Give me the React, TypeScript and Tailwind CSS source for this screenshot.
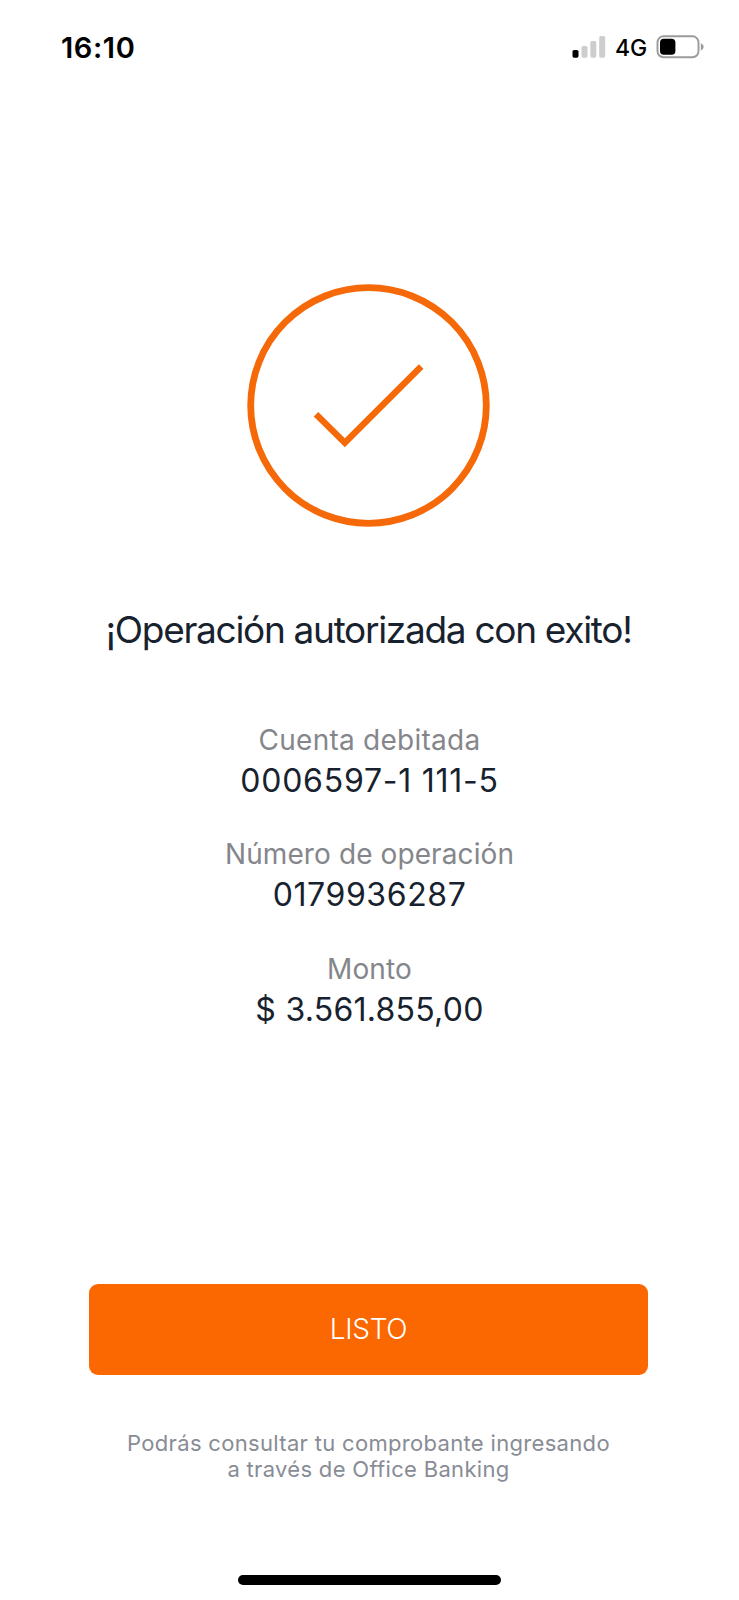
import React from 'react';

const details = [
  {
    label: 'Cuenta debitada',
    value: '0006597-1 111-5',
    labelSpacing: 'tracking-[0.25px]',
    valueSpacing: 'tracking-[0.75px]',
  },
  {
    label: 'Número de operación',
    value: '0179936287',
    labelSpacing: 'tracking-[0.1px]',
    valueSpacing: 'tracking-[0.6px]',
  },
  {
    label: 'Monto',
    value: '$ 3.561.855,00',
    labelSpacing: 'tracking-[0.15px]',
    valueSpacing: 'tracking-[0.25px]',
  },
];

const StatusBar = () => {
  return (
    <header className="flex h-[94px] items-center justify-between pl-[61px] pr-[35px] text-black">
      <span className="pt-px text-[29px] font-semibold leading-[94px] tracking-[0.6px]">16:10</span>
      <div className="flex items-center">
        <svg className="h-[24px] w-[34px]" viewBox="0 0 34 24" aria-hidden="true">
          <rect x="0.5" y="15" width="6" height="7.7" rx="1.6" fill="#000" />
          <rect x="9.5" y="11" width="6" height="11.7" rx="1.6" fill="#cdcdcd" />
          <rect x="18.3" y="6" width="6" height="16.7" rx="1.6" fill="#cdcdcd" />
          <rect x="27.2" y="1" width="6" height="21.7" rx="1.6" fill="#cdcdcd" />
        </svg>
        <span className="ml-[9px] w-[32px] pt-px text-[23px] font-medium leading-[30px]">4G</span>
        <svg className="ml-[8px] h-[24px] w-[49px]" viewBox="0 0 49 24" aria-hidden="true">
          <rect x="2.5" y="1.3" width="41" height="21" rx="6" fill="none" stroke="#9b9b9b" strokeWidth="1.9" />
          <rect x="5" y="3.8" width="15.4" height="16" rx="3.8" fill="#000" />
          <path d="M45.8 8.2c2 .8 2.8 2.2 2.8 3.6s-.8 2.8-2.8 3.6z" fill="#9b9b9b" />
        </svg>
      </div>
    </header>
  );
};

const SuccessIcon = () => {
  return (
    <svg
      className="h-[243px] w-[243px]"
      viewBox="0 0 243 243"
      fill="none"
      stroke="#f66908"
      aria-hidden="true"
    >
      <circle cx="121.5" cy="121.5" r="117.8" strokeWidth="6.8" />
      <path d="M69 130.3L97.8 158.7L174.2 82.5" strokeWidth="6.5" />
    </svg>
  );
};

const App = () => {
  return (
    <div className="flex h-[1600px] w-[739px] flex-col overflow-hidden bg-white font-[Inter,sans-serif] text-[#17222e]">
      <StatusBar />

      <main className="flex flex-col items-center">
        <div className="mr-[2px] mt-[190px]">
          <SuccessIcon />
        </div>

        <h1 className="mr-[2px] mt-[79px] whitespace-nowrap text-[37px] font-normal leading-[48px] tracking-[-1.3px]">
          ¡Operación autorizada con exito!
        </h1>

        <dl className="mt-[65.5px] flex flex-col gap-[33.5px] text-center">
          {details.map((item) => (
            <div key={item.label} className="flex flex-col">
              <dt className={`text-[28px] leading-[40px] text-[#85868b] ${item.labelSpacing}`}>
                {item.label}
              </dt>
              <dd className={`text-[32px] leading-[41px] ${item.valueSpacing}`}>{item.value}</dd>
            </div>
          ))}
        </dl>

        <button
          type="button"
          className="mr-[2px] mt-[254px] h-[91px] w-[559px] rounded-[9px] bg-[#fb6700] text-[28px] font-[350] tracking-[-0.3px] text-white"
        >
          LISTO
        </button>

        <p className="mr-[2px] mt-[55.3px] text-center text-[22px] leading-[26.5px] tracking-[0.32px] text-[#888c95]">
          Podrás consultar tu comprobante ingresando
          <br />
          a través de Office Banking
        </p>
      </main>

      <div className="mb-[15px] ml-[238px] mt-auto h-[10px] w-[263px] rounded-full bg-black" />
    </div>
  );
};

export default App;
